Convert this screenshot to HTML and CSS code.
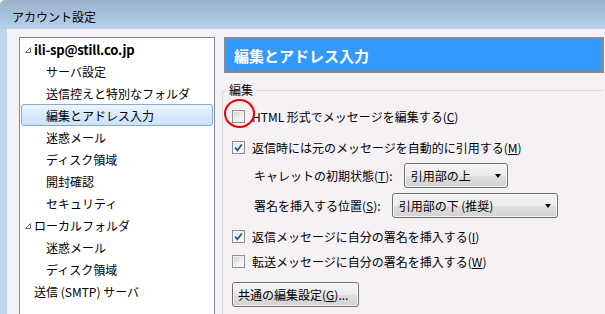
FILE: index.html
```html
<!DOCTYPE html>
<html lang="ja">
<head>
    <meta charset="UTF-8">
    <meta name="viewport" content="width=device-width, initial-scale=1.0">
    <title>アカウント設定</title>
    <link rel="stylesheet" href="styles.css">
</head>
<body>
    <div class="window">
        <div class="titlebar">アカウント設定</div>
        <div class="frame">
            <!-- アカウントツリー -->
            <div class="tree">
                <div class="node root">
                    <svg class="twisty" width="6" height="6" viewBox="0 0 6 6"><polygon points="5.5,0.5 5.5,5.5 0.5,5.5" fill="#fff" stroke="#6b6b6b" stroke-width="1"/></svg>
                    <span class="acct">ili-sp@still.co.jp</span>
                </div>
                <div class="node child">サーバ設定</div>
                <div class="node child">送信控えと特別なフォルダ</div>
                <div class="node child selected">編集とアドレス入力</div>
                <div class="node child">迷惑メール</div>
                <div class="node child">ディスク領域</div>
                <div class="node child">開封確認</div>
                <div class="node child">セキュリティ</div>
                <div class="node root">
                    <svg class="twisty" width="6" height="6" viewBox="0 0 6 6"><polygon points="5.5,0.5 5.5,5.5 0.5,5.5" fill="#fff" stroke="#6b6b6b" stroke-width="1"/></svg>
                    <span>ローカルフォルダ</span>
                </div>
                <div class="node child">迷惑メール</div>
                <div class="node child">ディスク領域</div>
                <div class="node root plain">送信 (SMTP) サーバ</div>
            </div>

            <!-- 設定パネル -->
            <div class="pane">
                <div class="pane-title">編集とアドレス入力</div>
                <fieldset class="group">
                    <legend>編集</legend>
                    <div class="check-row first">
                        <span class="box"></span>
                        <span>HTML 形式でメッセージを編集する(<u>C</u>)</span>
                        <span class="ring"></span>
                    </div>
                    <div class="check-row second">
                        <span class="box checked"><svg width="11" height="11" viewBox="0 0 11 11"><path d="M2.2 5.6 L4.4 8.3 L8.8 2.4" fill="none" stroke="#2d4f8e" stroke-width="1.7"/></svg></span>
                        <span>返信時には元のメッセージを自動的に引用する(<u>M</u>)</span>
                    </div>
                    <div class="field-row caret">
                        <span>キャレットの初期状態(<u>T</u>):</span>
                        <div class="combo short"><span>引用部の上</span><span class="arrow"></span></div>
                    </div>
                    <div class="field-row sigpos">
                        <span>署名を挿入する位置(<u>S</u>):</span>
                        <div class="combo long"><span>引用部の下 (推奨)</span><span class="arrow"></span></div>
                    </div>
                    <div class="check-row third">
                        <span class="box checked"><svg width="11" height="11" viewBox="0 0 11 11"><path d="M2.2 5.6 L4.4 8.3 L8.8 2.4" fill="none" stroke="#2d4f8e" stroke-width="1.7"/></svg></span>
                        <span>返信メッセージに自分の署名を挿入する(<u>I</u>)</span>
                    </div>
                    <div class="check-row fourth">
                        <span class="box"></span>
                        <span>転送メッセージに自分の署名を挿入する(<u>W</u>)</span>
                    </div>
                    <button class="push">共通の編集設定(<u>G</u>)...</button>
                </fieldset>
            </div>
        </div>
    </div>
</body>
</html>
```

FILE: styles.css
```css
html {
    background-color: #fff;
}
body {
    margin: 0;
    overflow: hidden;
    font-family: "Noto Sans CJK JP", "Noto Sans", sans-serif;
    font-size: 12px;
    color: #000;
}
.window {
    height: 314px;
    background-color: #f6f1f5;
    border-top-left-radius: 5px;
    overflow: hidden;
}
.titlebar {
    height: 29px;
    box-sizing: border-box;
    padding: 3px 0 0 12px;
    display: flex;
    align-items: center;
    background: linear-gradient(#9bb1ca, #a9c2dd 55%, #b6d2ee);
}
.frame {
    display: flex;
    align-items: flex-start;
    border-left: 7px solid #bed6ee;
    padding: 8px 1px 0 12px;
}
.tree {
    width: 196px;
    height: 300px;
    box-sizing: border-box;
    flex-shrink: 0;
    background-color: #fff;
    border: 1px solid #828790;
}
.node {
    height: 22px;
    display: flex;
    align-items: center;
    white-space: nowrap;
}
.node.root {
    padding-left: 5px;
}
.node.plain {
    padding-left: 14px;
}
.twisty {
    margin: 1px 3px 0 0;
}
.acct {
    font-weight: bold;
    font-size: 13px;
    letter-spacing: -0.2px;
}
.node.child {
    padding-left: 26px;
}
.node.selected {
    margin: 0 1px;
    padding-left: 24px;
    border: 1px solid #84aad8;
    border-radius: 3px;
    box-sizing: border-box;
    background: linear-gradient(#eef5fe, #d9e9fd 50%, #cde2fc);
}
.pane {
    flex: 1;
    margin-left: 9px;
}
.pane-title {
    height: 36px;
    box-sizing: border-box;
    border: 2px solid #8a8a8a;
    background-color: #3399ff;
    color: #fff;
    font-weight: bold;
    font-size: 15px;
    padding-left: 8px;
    display: flex;
    align-items: center;
}
.group {
    margin: 9px 0 0 -2px;
    padding: 7px 0 30px 9px;
    border: 1px solid #d5dde3;
    border-right: none;
    border-bottom: none;
    border-top-left-radius: 3px;
}
.group legend {
    margin-left: -5px;
    padding: 0 2px;
    line-height: 16px;
}
.check-row {
    position: relative;
    height: 22px;
    display: flex;
    align-items: center;
    gap: 7px;
}
.check-row.second {
    margin-top: 9px;
}
.check-row.third {
    margin-top: 7px;
}
.check-row.fourth {
    margin-top: 3px;
}
.box {
    width: 13px;
    height: 13px;
    box-sizing: border-box;
    border: 1px solid #8e8f8f;
    background: linear-gradient(135deg, #cdd0d5, #eef0f2 60%, #fdfdfd);
    box-shadow: inset 0 0 0 1px #f3f3f3;
    display: flex;
    align-items: center;
    justify-content: center;
}
.box.checked {
    background: linear-gradient(135deg, #dde1e6, #f6f7f8 60%, #fff);
}
.ring {
    position: absolute;
    left: -8px;
    top: -6px;
    width: 31px;
    height: 29px;
    box-sizing: border-box;
    border: 2px solid #ee0000;
    border-radius: 50%;
}
.field-row {
    height: 25px;
    display: flex;
    align-items: center;
    padding-left: 22px;
}
.field-row.caret {
    margin-top: 5px;
}
.field-row.sigpos {
    margin-top: 5px;
}
.combo {
    height: 25px;
    box-sizing: border-box;
    margin-left: 11px;
    padding: 0 6px;
    display: flex;
    align-items: center;
    justify-content: space-between;
    border: 1px solid #707070;
    border-radius: 3px;
    background: linear-gradient(#f4f4f4, #ececec 50%, #dfdfdf 52%, #d2d2d2);
    box-shadow: inset 0 0 0 1px rgba(255, 255, 255, 0.7);
}
.combo.short {
    width: 104px;
}
.combo.long {
    width: 166px;
}
.arrow {
    width: 0;
    height: 0;
    border-left: 3.5px solid transparent;
    border-right: 3.5px solid transparent;
    border-top: 4px solid #000;
}
.push {
    margin-top: 10px;
    width: 127px;
    height: 25px;
    padding: 0 5px;
    text-align: left;
    font-family: inherit;
    font-size: 12px;
    color: #000;
    border: 1px solid #707070;
    border-radius: 3px;
    background: linear-gradient(#f4f4f4, #ececec 50%, #dfdfdf 52%, #d2d2d2);
    box-shadow: inset 0 0 0 1px rgba(255, 255, 255, 0.7);
}
```
